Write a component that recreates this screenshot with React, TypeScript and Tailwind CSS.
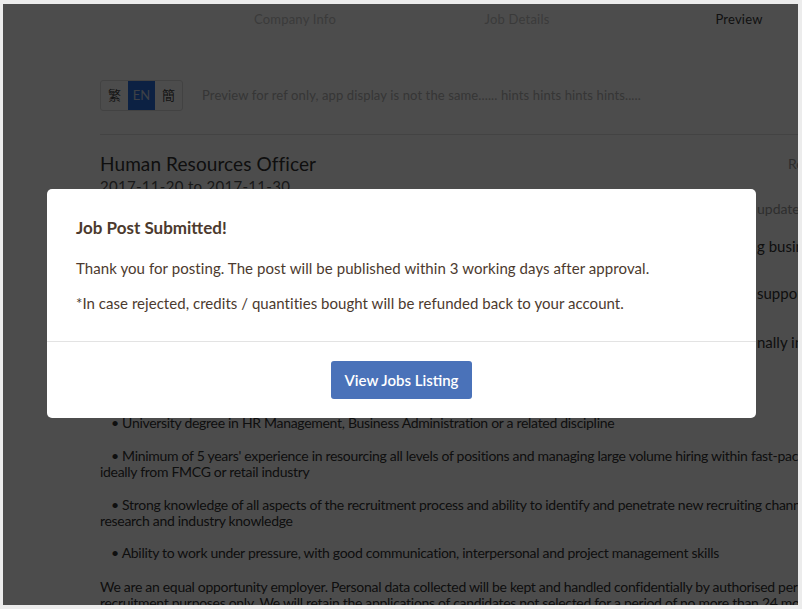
import React from 'react'

const font = "font-['Lato','Noto_Sans_CJK_TC',sans-serif]"

// a line whose start is covered by the modal; only the tail shows at the right edge
const CoveredLine = ({ hidden, shown, className }: { hidden: string; shown: string; className: string }) => (
  <div className={`flex whitespace-nowrap ${className}`}>
    <span className="w-[657px] shrink-0 overflow-hidden">{hidden}</span>
    <span>{shown}</span>
  </div>
)

const App = () => {
  return (
    <div className={`w-[802px] h-[609px] bg-[#ececec] pt-[4px] pl-[3px] pr-[4px] pb-[4px] ${font}`}>
      <div className="relative h-full overflow-hidden bg-white">
        {/* Underlying page */}
        <div className="text-[#333]">
          {/* Steps */}
          <div className="flex h-[32px] items-center pl-[181px] text-[13px] whitespace-nowrap">
            <div className="w-[222px] shrink-0 text-center tracking-[0.2px] text-[#c4c4c4]">Company Info</div>
            <div className="w-[222px] shrink-0 text-center tracking-[0.2px] text-[#c4c4c4]">Job Details</div>
            <div className="w-[222px] shrink-0 text-center tracking-[0.2px] text-[#3a3a3a]">Preview</div>
          </div>

          <div className="ml-[97px]">
            {/* Language + hint */}
            <div className="mt-[44px] flex h-[31px] items-center">
              <div className="flex h-full overflow-hidden rounded-[3px] border border-[#ddd] text-[13px]">
                <span className="flex w-[27px] items-center justify-center text-[#444]">繁</span>
                <span className="flex w-[27px] items-center justify-center bg-[#2a6fe0] text-[#cdd8ea]">EN</span>
                <span className="flex w-[27px] items-center justify-center text-[#444]">簡</span>
              </div>
              <span className="ml-[19px] whitespace-nowrap text-[13px] tracking-[0.12px] text-[#b4b4b4]">
                Preview for ref only, app display is not the same...... hints hints hints hints.....
              </span>
            </div>

            <div className="mt-[23px] border-t border-[#e2e2e2]" />

            {/* Job header */}
            <div className="mt-[17px] grid grid-cols-[688px_1fr] whitespace-nowrap">
              <div className="text-[19px] leading-[24px] tracking-[0.1px] text-[#333]">Human Resources Officer</div>
              <div className="text-[14px] leading-[24px] text-[#999]">Ref. No.: HR-0012</div>
            </div>
            <div className="text-[15px] leading-[20px] tracking-[0.3px] text-[#555]">2017-11-20 to 2017-11-30</div>

            <CoveredLine
              className="mt-[3px] text-[14px] leading-[20px] text-[#9a9a9a]"
              hidden="Central, Hong Kong | Full Time | Monthly Salary HK$20,000 - 30,000 | Last "
              shown="updated 2017-11-20"
            />
            <CoveredLine
              className="mt-[17px] text-[15px] leading-[20px] text-[#333]"
              hidden="We are a leading retail group in Hong Kong and we are looking for talents to support our growin"
              shown="g business"
            />
            <CoveredLine
              className="mt-[27px] text-[15px] leading-[20px] text-[#333]"
              hidden="The Human Resources Officer will handle the full spectrum of recruitment and provide"
              shown=" support to"
            />
            <CoveredLine
              className="mt-[29px] text-[15px] leading-[20px] text-[#333]"
              hidden="Responsibilities include liaising with hiring managers and stakeholders inter"
              shown="nally including"
            />

            {/* Requirements */}
            <div className="mt-[63px] whitespace-nowrap text-[14px] leading-[16px] tracking-[-0.3px] text-[#333]">
              <div className="pl-[11px]">• University degree in HR Management, Business Administration or a related discipline</div>
              <div className="mt-[17px]">
                <div className="pl-[11px]">
                  • Minimum of 5 years' experience in resourcing all levels of positions and managing large volume hiring within fast-paced environment,
                </div>
                <div>ideally from FMCG or retail industry</div>
              </div>
              <div className="mt-[17px]">
                <div className="pl-[11px]">
                  • Strong knowledge of all aspects of the recruitment process and ability to identify and penetrate new recruiting channels through market
                </div>
                <div>research and industry knowledge</div>
              </div>
              <div className="mt-[16px] pl-[11px]">
                • Ability to work under pressure, with good communication, interpersonal and project management skills
              </div>
              <div className="mt-[18px]">
                <div>
                  We are an equal opportunity employer. Personal data collected will be kept and handled confidentially by authorised personnel for
                </div>
                <div>
                  recruitment purposes only. We will retain the applications of candidates not selected for a period of no more than 24 months.
                </div>
              </div>
            </div>
          </div>
        </div>

        {/* Overlay */}
        <div className="absolute inset-0 bg-black/70" />

        {/* Modal */}
        <div className="absolute left-[44px] top-[185px] w-[709px] h-[229px] rounded-[5px] bg-white">
          <div className="px-[29px] pt-[28px] pb-[27px] text-[#4c3a2e]">
            <h2 className="text-[17px] font-bold leading-[22px]">Job Post Submitted!</h2>
            <p className="mt-[18px] text-[15px] leading-[22px] tracking-[0.07px]">
              Thank you for posting. The post will be published within 3 working days after approval.
            </p>
            <p className="mt-[13px] text-[15px] leading-[22px] tracking-[0.04px]">
              *In case rejected, credits / quantities bought will be refunded back to your account.
            </p>
          </div>
          <div className="flex justify-center border-t border-[#e3e3e3] pt-[19px]">
            <button className="h-[38px] w-[141px] rounded-[3px] bg-[#4a72b9] text-[15px] font-semibold text-white">
              View Jobs Listing
            </button>
          </div>
        </div>
      </div>
    </div>
  )
}

export default App
